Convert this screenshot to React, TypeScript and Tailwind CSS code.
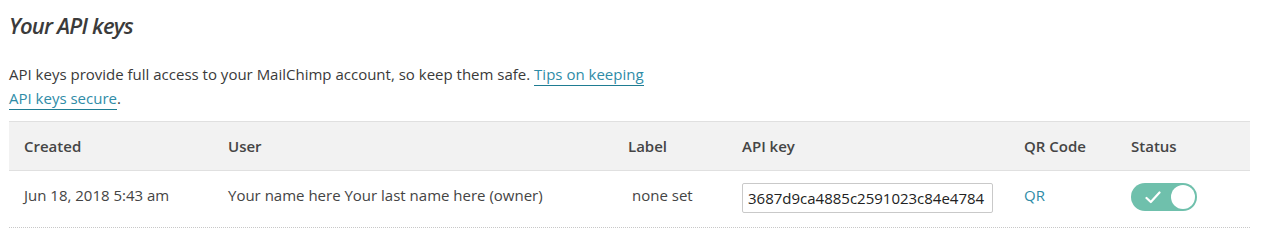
import React from "react";

const columns = ["Created", "User", "Label", "API key", "QR Code", "Status"];

const Toggle: React.FC<{ on: boolean }> = ({ on }) => (
  <div
    className={`w-[66px] h-[28px] rounded-full flex items-center justify-between pl-[14px] pr-[2px] ${
      on ? "bg-[#6fc0ac]" : "bg-gray-300"
    }`}
  >
    <svg width="16" height="13" viewBox="0 0 16 13" fill="none">
      <path
        d="M1.5 7 L5.8 11 L14.5 1.5"
        stroke="white"
        strokeWidth="2.2"
        strokeLinecap="round"
        strokeLinejoin="round"
      />
    </svg>
    <div className="w-[24px] h-[24px] rounded-full bg-white" />
  </div>
);

const ApiKeys: React.FC = () => {
  return (
    <div className="w-[1265px] h-[237px] bg-white pl-[9px] pr-[15px] font-['Open_Sans',sans-serif] text-[#333]">
      <h1 className="pt-[9px] text-[22px] leading-[32px] italic font-semibold font-stretch-[90%] tracking-[-0.8px] text-[#3b3b3b]">
        Your API keys
      </h1>

      <p className="mt-[21px] w-[650px] text-[15px] leading-[24px] text-[#3a3a3a]">
        API keys provide full access to your MailChimp account, so keep them
        safe.{" "}
        <a
          href="#"
          className="text-[#2f8ca7] border-b border-[#1f7c92] pb-[1px]"
        >
          Tips on keeping API keys secure
        </a>
        .
      </p>

      <div className="mt-[11px]">
        <div className="grid grid-cols-[204px_400px_114px_282px_107px_1fr] h-[50px] items-center bg-[#f2f2f2] border-t border-b border-[#e0e0e0] text-[15px] font-semibold text-[#454545]">
          {columns.map((c) => (
            <div key={c} className="pl-[15px]">
              {c}
            </div>
          ))}
        </div>

        <div className="grid grid-cols-[204px_400px_114px_282px_107px_1fr] h-[57px] items-center border-b border-dotted border-[#c8c8c8] text-[15px] text-[#444]">
          <div className="pl-[15px] pb-[7px]">Jun 18, 2018 5:43 am</div>
          <div className="pl-[15px] pb-[7px]">
            Your name here Your last name here (owner)
          </div>
          <div className="pl-[19px] pb-[7px]">none set</div>
          <div className="pl-[15px] pb-[2px]">
            <input
              readOnly
              value="3687d9ca4885c2591023c84e4784"
              className="w-[251px] h-[30px] border-[1.5px] border-[#c9c9c9] rounded-[2px] pl-[5px] text-[15px] text-[#222] bg-white outline-none"
            />
          </div>
          <div className="pl-[15px] pb-[7px]">
            <a href="#" className="text-[#2f8ca7]">
              QR
            </a>
          </div>
          <div className="pl-[15px] pb-[4px]">
            <Toggle on={true} />
          </div>
        </div>
      </div>
    </div>
  );
};

export default function App() {
  return <ApiKeys />;
}
